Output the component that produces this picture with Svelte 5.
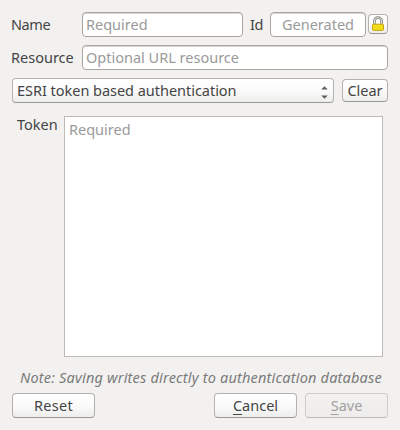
<script>
  let name = $state('');
  let id = $state('');
  let resource = $state('');
  let token = $state('');
</script>

<main class="dialog">
  <div class="row first">
    <label class="label name" for="name">Name</label>
    <input id="name" class="name-field" placeholder="Required" bind:value={name} />
    <label class="label id-label" for="id">Id</label>
    <input id="id" class="id-field" placeholder="Generated" bind:value={id} />
    <button class="lock" aria-label="Unlock id">
      <svg width="14" height="16" viewBox="0 0 14 16">
        <path d="M3.4 9V5.2a3.6 3.6 0 0 1 7.2 0V9" fill="none" stroke="#85857f" stroke-width="2.6" />
        <path d="M3.4 9V5.2a3.6 3.6 0 0 1 7.2 0V9" fill="none" stroke="#e6e6e3" stroke-width="1" />
        <rect x="1.5" y="8.2" width="11" height="6.2" rx="1" fill="#f0dc1c" stroke="#c8a50c" />
      </svg>
    </button>
  </div>

  <div class="row second">
    <label class="label resource" for="resource">Resource</label>
    <input id="resource" class="resource-field" placeholder="Optional URL resource" bind:value={resource} />
  </div>

  <div class="row third">
    <button class="combo">
      <span class="combo-text">ESRI token based authentication</span>
      <svg width="7" height="13" viewBox="0 0 7 13">
        <path d="M0.3 3.6 3.5 0.3 6.7 3.6zM0.3 9.4 3.5 12.7 6.7 9.4z" fill="#5c5c5c" />
      </svg>
    </button>
    <button class="clear"><span>Clear</span></button>
  </div>

  <div class="row fourth">
    <label class="label token" for="token">Token</label>
    <textarea id="token" placeholder="Required" bind:value={token}></textarea>
  </div>

  <p class="note"><span>Note: Saving writes directly to authentication database</span></p>

  <div class="row actions">
    <button class="reset"><span>Reset</span></button>
    <button class="cancel"><span><u>C</u>ancel</span></button>
    <button class="save" disabled><span><u>S</u>ave</span></button>
  </div>
</main>

<style>
  :global(body) {
    background: #f2f1f0;
  }
  .dialog {
    box-sizing: border-box;
    width: 400px;
    height: 430px;
    padding: 12px 12px 0;
    overflow: hidden;
    background: #f2f1f0;
    color: #444;
    font: 14.5px/20px "Noto Sans", sans-serif;
  }
  .row {
    display: flex;
    white-space: nowrap;
  }
  .label {
    flex: none;
    line-height: 25px;
  }
  input,
  textarea,
  button {
    box-sizing: border-box;
    flex: none;
    margin: 0;
    font: inherit;
    color: inherit;
    outline: none;
  }
  input {
    height: 25px;
    padding: 0 3px 2px;
    background: #fff;
    border: 1px solid #aaa59f;
    border-radius: 4px;
    box-shadow: inset 0 1px 0 #d9d7d4;
  }
  ::placeholder {
    color: #9a9a9a;
    opacity: 1;
  }
  button {
    display: flex;
    align-items: center;
    justify-content: center;
    height: 25px;
    padding: 0 0 2px;
    background: linear-gradient(#fff, #fbfbfb 50%, #ededec);
    border: 1px solid #b5b2ae;
    border-bottom-color: #9b9893;
    border-radius: 4px;
  }
  .first {
    height: 33px;
  }
  .name,
  .resource {
    width: 71px;
    margin-left: -1px;
  }
  .name {
    letter-spacing: -0.4px;
  }
  .name-field {
    width: 161px;
  }
  .id-label {
    width: 20px;
    margin-left: 7px;
    letter-spacing: -0.4px;
  }
  .id-field {
    width: 96px;
    text-align: center;
  }
  .lock {
    width: 20px;
    height: 20px;
    margin: 2px 0 0 2px;
    padding: 0;
  }
  .second {
    height: 33px;
  }
  .resource-field {
    width: 306px;
  }
  .third {
    height: 38px;
    gap: 8px;
  }
  .combo {
    width: 322px;
    padding: 0 5px 2px 4px;
    justify-content: space-between;
  }
  .combo-text {
    letter-spacing: -0.03px;
  }
  .combo svg {
    margin-top: 6px;
  }
  .clear {
    width: 46px;
    height: 23px;
    margin-top: 1px;
    padding-bottom: 1px;
  }
  .fourth {
    height: 241px;
  }
  .token {
    width: 47px;
    margin-left: 5px;
    line-height: 16px;
  }
  textarea {
    width: 319px;
    height: 241px;
    padding: 2px 4px;
    background: #fff;
    border: 1px solid #bebbb6;
    border-radius: 0;
    resize: none;
  }
  .note {
    height: 36px;
    margin: 0 0 0 8px;
    padding-top: 10px;
    box-sizing: border-box;
    color: #7a7a7a;
    font-style: italic;
    letter-spacing: 0.19px;
    white-space: nowrap;
  }
  .cancel {
    margin: 0 8px 0 auto;
  }
  .reset,
  .cancel,
  .save {
    width: 83px;
  }
  .reset {
    letter-spacing: 0.3px;
  }
  .save {
    color: #a0a0a0;
    background: linear-gradient(#f2f1f0, #eeedec);
    border-color: #cfccc9;
    border-bottom-color: #bdbab6;
  }
  u {
    text-decoration-thickness: 1px;
    text-underline-offset: 3px;
  }
</style>
